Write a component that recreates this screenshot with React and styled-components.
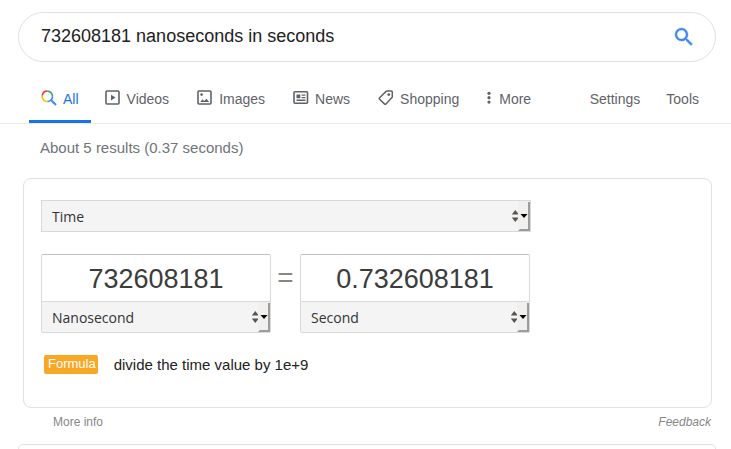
import React, { useState } from "react";

import styled, { createGlobalStyle, css } from "styled-components";

const GlobalStyle = createGlobalStyle`
  * {
    box-sizing: border-box;
  }
  body {
    margin: 0;
    background: #fff;
    color: #222;
    font-family: "Liberation Sans", Arial, sans-serif;
  }
`;

const Page = styled.div`
  display: flex;
  flex-direction: column;
  min-height: 100vh;
`;

const SearchForm = styled.form`
  display: flex;
  align-items: center;
  height: 50px;
  margin: 12px 15px 0 18px;
  padding: 0 19px 0 22px;
  border: 1px solid #dfe1e5;
  border-radius: 25px;
`;

const SearchInput = styled.input`
  flex: 1;
  min-width: 0;
  padding: 0 0 2px;
  border: 0;
  outline: 0;
  color: #222;
  background: transparent;
  font: 18px/24px "Liberation Sans", Arial, sans-serif;
`;

const SearchButton = styled.button`
  display: flex;
  padding: 0;
  border: 0;
  background: none;
  cursor: pointer;
`;

const Nav = styled.nav`
  display: flex;
  gap: 14px;
  height: 62px;
  padding: 0 18px 0 29px;
  border-bottom: 1px solid #ebebeb;
`;

const Tab = styled.a`
  display: flex;
  align-items: center;
  gap: ${(p) => p.$gap || "6px"};
  height: 61px;
  padding: ${(p) => (p.$active ? "16px 12px 0" : "16px 0 0")};
  margin-right: ${(p) => (p.$active ? "0" : "14px")};
  border-bottom: ${(p) => (p.$active ? "3px solid #1a73e8" : "3px solid transparent")};
  color: ${(p) => (p.$active ? "#1a73e8" : "#5f6368")};
  font-size: 14px;
  line-height: 16px;
  text-decoration: none;
  white-space: nowrap;

  svg {
    flex: none;
    margin-bottom: 2px;
  }
`;

const Tools = styled.div`
  display: flex;
  gap: 12px;
  margin-left: auto;
`;

const Stats = styled.div`
  margin: 14px 40px 0;
  color: #70757a;
  font-size: 15px;
  line-height: 20px;
`;

const Card = styled.section`
  margin: 20px 19px 0 23px;
  padding: 21px 17px 32px;
  border: 1px solid #dfe1e5;
  border-radius: 8px;
`;

const Converter = styled.div`
  max-width: 490px;
`;

const Units = styled.div`
  display: flex;
  margin: 22px 1px 0 0;
`;

const Unit = styled.div`
  flex: 1;
  min-width: 0;
`;

const Equals = styled.div`
  width: 29px;
  color: #878787;
  font-size: 28px;
  line-height: 48px;
  text-align: center;
`;

const Amount = styled.input`
  display: block;
  width: 100%;
  height: 47px;
  padding: 2px 0 0;
  border: 1px solid #d9d9d9;
  border-top-color: #c0c0c0;
  border-bottom: 0;
  border-radius: 2px 2px 0 0;
  outline: 0;
  color: #3c3c3c;
  font: 27px/32px "Liberation Sans", Arial, sans-serif;
  text-align: center;
`;

const SelectBox = styled.div`
  position: relative;
`;

const Select = styled.select`
  display: block;
  width: 100%;
  height: 32px;
  padding: 2px 24px 0 10px;
  border: 1px solid #d9d9d9;
  border-radius: ${(p) => (p.$attached ? "0 0 2px 2px" : "0")};
  outline: 0;
  appearance: none;
  background: #f4f4f4;
  color: #333;
  font: 14px/20px "Open Sans", "Noto Sans", sans-serif;
`;

const SelectArrows = styled.svg`
  position: absolute;
  top: 0;
  right: 1px;
  pointer-events: none;
`;

const Formula = styled.div`
  display: flex;
  align-items: center;
  gap: 16px;
  margin: 21px 0 0 3px;
  font-size: 15px;
  line-height: 21px;
`;

const Badge = styled.span`
  padding: 0 2px 2px 4px;
  border-radius: 2px;
  background: #f9a825;
  color: #fff;
  font-size: 13px;
  line-height: 17px;
`;

const Footer = styled.footer`
  display: flex;
  justify-content: space-between;
  margin: 7px 20px 0 53px;
  font-size: 12px;
  line-height: 14px;
`;

const FooterLink = styled.a`
  color: #878787;
  text-decoration: none;
  ${(p) =>
    p.$italic &&
    css`
      font-style: italic;
    `}
`;

const NextCard = styled.section`
  flex: 1;
  margin: 15px 15px 0 18px;
  border: 1px solid #dfe1e5;
  border-bottom: 0;
  border-radius: 8px 8px 0 0;
`;

const SearchIcon = () => (
  <svg width="24" height="24" viewBox="0 0 24 24" fill="#4285f4" stroke="#4285f4" strokeWidth="0.4">
    <path d="M15.5 14h-.79l-.28-.27A6.47 6.47 0 0 0 16 9.5 6.5 6.5 0 1 0 9.5 16c1.61 0 3.09-.59 4.23-1.57l.27.28v.79l5 4.99L20.49 19l-4.99-5zm-6 0C7.01 14 5 11.99 5 9.5S7.01 5 9.5 5 14 7.01 14 9.5 11.99 14 9.5 14z" />
  </svg>
);

const AllIcon = () => (
  <svg width="16" height="16" viewBox="0 0 16 16" fill="none" strokeWidth="1.6">
    <path d="M10.2 10.2 15 15" stroke="#4285f4" strokeWidth="2" />
    <path d="M1.2 5.6A5.2 5.2 0 0 1 6.3 1.1" stroke="#ea4335" />
    <path d="M6.3 1.1a5.2 5.2 0 0 1 5.2 5.2" stroke="#34a853" />
    <path d="M11.5 6.3a5.2 5.2 0 0 1-5.2 5.2" stroke="#4285f4" />
    <path d="M6.3 11.5a5.2 5.2 0 0 1-5.1-5.9" stroke="#fbbc05" />
  </svg>
);

const VideosIcon = () => (
  <svg width="16" height="16" viewBox="0 0 16 16">
    <rect x="1" y="1" width="13" height="13" rx="1" fill="none" stroke="#5f6368" strokeWidth="1.6" />
    <path d="M6 4.8v5.6L10.5 7.6z" fill="#5f6368" />
  </svg>
);

const ImagesIcon = () => (
  <svg width="16" height="16" viewBox="0 0 16 16">
    <rect x="1" y="1" width="13" height="13" rx="1" fill="none" stroke="#5f6368" strokeWidth="1.6" />
    <circle cx="4.6" cy="4.6" r="1.3" fill="#5f6368" />
    <path d="M3.3 12 5.5 9.3l1.7 1.6L9.5 8.7l2.7 3.3z" fill="#5f6368" />
  </svg>
);

const NewsIcon = () => (
  <svg width="16" height="16" viewBox="0 0 16 16">
    <rect x="1" y="1.8" width="13.5" height="11.5" rx="1" fill="none" stroke="#5f6368" strokeWidth="1.6" />
    <path d="M3.5 4.4h3.8v3.8H3.5zM8.6 4.4h3.8v1.3H8.6zM8.6 6.9h3.8v1.3H8.6zM3.5 9.5h9v1.4h-9z" fill="#5f6368" />
  </svg>
);

const ShoppingIcon = () => (
  <svg width="16" height="16" viewBox="0 0 16 16">
    <path
      d="M9 1h4.2q1.1 0 1.1 1.1v4.6q0 .5-.4.9L8 13.9q-.8.8-1.6 0L1.6 9.3q-.8-.8 0-1.6L8.1 1.4Q8.5 1 9 1z"
      fill="none"
      stroke="#5f6368"
      strokeWidth="1.5"
    />
    <circle cx="10.8" cy="4.6" r="1.4" fill="#5f6368" />
  </svg>
);

const MoreIcon = () => (
  <svg width="4" height="16" viewBox="0 0 4 16" fill="#5f6368">
    <circle cx="2" cy="3.3" r="1.6" />
    <circle cx="2" cy="7.7" r="1.6" />
    <circle cx="2" cy="12.1" r="1.6" />
  </svg>
);

const tabs = [
  { label: "All", Icon: AllIcon, active: true },
  { label: "Videos", Icon: VideosIcon },
  { label: "Images", Icon: ImagesIcon },
  { label: "News", Icon: NewsIcon },
  { label: "Shopping", Icon: ShoppingIcon },
  { label: "More", Icon: MoreIcon, gap: "8px" },
];

function UnitSelect({ label, value, options, onChange, attached }) {
  return (
    <SelectBox>
      <Select
        aria-label={label}
        value={value}
        onChange={(e) => onChange(e.target.value)}
        $attached={attached}
      >
        {options.map((o) => (
          <option key={o}>{o}</option>
        ))}
      </Select>
      <SelectArrows width="20" height="32" viewBox="0 0 20 32">
        <path d="M1.8 14.5 5.3 10 8.8 14.5zM1.8 17.5h7L5.3 22z" fill="#555" />
        <path d="M8 1h12v30H8z" fill="#f1f0ee" />
        <path d="M18 2h2v29H8l2-2h8z" fill="#9c9c9c" />
        <path d="M10.5 14h7L14 18z" fill="#000" />
      </SelectArrows>
    </SelectBox>
  );
}

function App() {
  const [query, setQuery] = useState("732608181 nanoseconds in seconds");
  const [measure, setMeasure] = useState("Time");
  const [from, setFrom] = useState("Nanosecond");
  const [to, setTo] = useState("Second");
  const [amount, setAmount] = useState("732608181");
  const [result, setResult] = useState("0.732608181");

  return (
    <>
      <GlobalStyle />
      <Page>
        <SearchForm role="search" onSubmit={(e) => e.preventDefault()}>
          <SearchInput aria-label="Search" value={query} onChange={(e) => setQuery(e.target.value)} />
          <SearchButton type="submit" aria-label="Search">
            <SearchIcon />
          </SearchButton>
        </SearchForm>
        <Nav>
          {tabs.map(({ label, Icon, active, gap }) => (
            <Tab key={label} href="#" $active={active} $gap={gap}>
              <Icon />
              {label}
            </Tab>
          ))}
          <Tools>
            <Tab href="#">Settings</Tab>
            <Tab href="#">Tools</Tab>
          </Tools>
        </Nav>
        <Stats>About 5 results (0.37 seconds)</Stats>
        <Card>
          <Converter>
            <UnitSelect label="Measure" value={measure} options={["Time", "Length", "Mass"]} onChange={setMeasure} />
            <Units>
              <Unit>
                <Amount aria-label="From" value={amount} onChange={(e) => setAmount(e.target.value)} />
                <UnitSelect
                  label="From unit"
                  value={from}
                  options={["Nanosecond", "Second"]}
                  onChange={setFrom}
                  attached
                />
              </Unit>
              <Equals>=</Equals>
              <Unit>
                <Amount aria-label="To" value={result} onChange={(e) => setResult(e.target.value)} />
                <UnitSelect
                  label="To unit"
                  value={to}
                  options={["Second", "Nanosecond"]}
                  onChange={setTo}
                  attached
                />
              </Unit>
            </Units>
          </Converter>
          <Formula>
            <Badge>Formula</Badge>
            <span>divide the time value by 1e+9</span>
          </Formula>
        </Card>
        <Footer>
          <FooterLink href="#">More info</FooterLink>
          <FooterLink href="#" $italic>
            Feedback
          </FooterLink>
        </Footer>
        <NextCard />
      </Page>
    </>
  );
}

export default App;
